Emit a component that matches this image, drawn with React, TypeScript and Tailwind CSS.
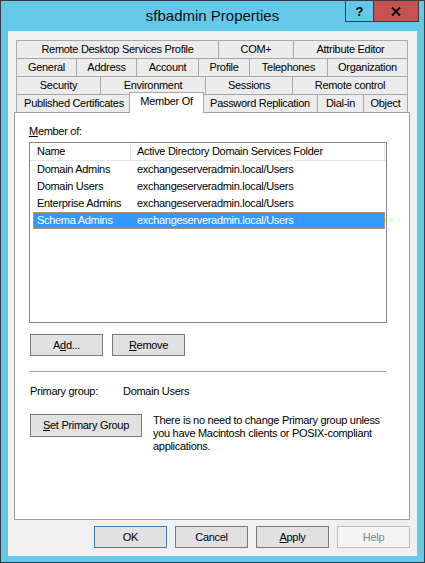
import React from "react";

type Tab = { label: string; w: number; selected?: boolean };

const rows: Tab[][] = [
  [
    { label: "Remote Desktop Services Profile", w: 202 },
    { label: "COM+", w: 75 },
    { label: "Attribute Editor", w: 115 },
  ],
  [
    { label: "General", w: 60 },
    { label: "Address", w: 60 },
    { label: "Account", w: 62 },
    { label: "Profile", w: 51 },
    { label: "Telephones", w: 78 },
    { label: "Organization", w: 81 },
  ],
  [
    { label: "Security", w: 84 },
    { label: "Environment", w: 105 },
    { label: "Sessions", w: 87 },
    { label: "Remote control", w: 116 },
  ],
  [
    { label: "Published Certificates", w: 115 },
    { label: "Member Of", w: 71, selected: true },
    { label: "Password Replication", w: 115 },
    { label: "Dial-in", w: 46 },
    { label: "Object", w: 45 },
  ],
];

const members = [
  ["Domain Admins", "exchangeserveradmin.local/Users"],
  ["Domain Users", "exchangeserveradmin.local/Users"],
  ["Enterprise Admins", "exchangeserveradmin.local/Users"],
  ["Schema Admins", "exchangeserveradmin.local/Users"],
];

function TabRow({ tabs }: { tabs: Tab[] }) {
  return (
    <div className="flex h-[18px] items-start">
      {tabs.map((t, i) => {
        const last = i === tabs.length - 1;
        if (t.selected) {
          return (
            <div
              key={t.label}
              style={{ width: t.w + 4 }}
              className="relative z-10 -mx-[2px] -mt-[2px] h-[21px] shrink-0 border-t border-l border-r border-[#a8a8a8] bg-white flex items-center justify-center pb-[3px]"
            >
              {t.label}
            </div>
          );
        }
        return (
          <div
            key={t.label}
            style={{ width: t.w }}
            className={
              last
                ? "h-[18px] shrink-0 border-t border-l border-r border-[#a8a8a8] bg-[#ececec] flex items-center justify-center"
                : "h-[18px] shrink-0 border-t border-l border-[#a8a8a8] bg-[#ececec] flex items-center justify-center"
            }
          >
            {t.label}
          </div>
        );
      })}
    </div>
  );
}

function Btn({
  children,
  w,
  h = 22,
  variant = "normal",
}: {
  children: React.ReactNode;
  w: number;
  h?: number;
  variant?: "normal" | "default" | "disabled";
}) {
  const cls =
    variant === "default"
      ? "shrink-0 border border-[#3c7fb1] bg-[#e1e1e1] flex items-center justify-center"
      : variant === "disabled"
      ? "shrink-0 border border-[#bfbfbf] bg-[#f4f4f4] text-[#838383] flex items-center justify-center"
      : "shrink-0 border border-[#7a7a7a] bg-[#e1e1e1] flex items-center justify-center";
  return (
    <div style={{ width: w, height: h }} className={cls}>
      <span>{children}</span>
    </div>
  );
}

export default function App() {
  return (
    <div className="w-[425px] h-[563px] bg-[#63c8ea] border border-[#3b3b3b] flex flex-col font-['Liberation_Sans',Arial,sans-serif] text-[11px] leading-[13px] tracking-[-0.3px] text-black">
      {/* Title bar */}
      <div className="relative h-[30px] shrink-0 flex items-center justify-center">
        <span className="text-[15px] leading-[18px] tracking-normal text-[#111]">
          sfbadmin Properties
        </span>
        <div className="absolute -top-[1px] right-[5px] flex">
          <div className="w-[29px] h-[22px] border border-[#3b3b3b] bg-[#63c8ea] flex items-center justify-center text-[13px] font-bold tracking-normal">
            ?
          </div>
          <div className="w-[45px] h-[22px] border-t border-r border-b border-[#3b3b3b] bg-[#c75050] flex items-center justify-center">
            <svg width="10" height="9" viewBox="0 0 10 9">
              <path d="M1 0.5 L9 8.5 M9 0.5 L1 8.5" stroke="#000" strokeWidth="2" />
            </svg>
          </div>
        </div>
      </div>

      {/* Client area */}
      <div className="mx-[7px] mb-[6px] flex-1 bg-[#f0f0f0] flex flex-col pl-[6px] pr-[7px] pt-[9px]">
        {/* Tabs */}
        <div className="mx-[2px] flex flex-col">
          {rows.map((r, i) => (
            <TabRow key={i} tabs={r} />
          ))}
        </div>

        {/* Panel */}
        <div className="h-[408px] shrink-0 border border-[#999ca3] bg-white flex flex-col pl-[14px]">
          <div className="mt-[12px] h-[13px]">
            <span className="underline underline-offset-1">M</span>ember of:
          </div>

          {/* List */}
          <div className="mt-[4px] w-[358px] h-[181px] border border-[#828790] bg-white flex flex-col">
            <div className="flex h-[18px] border-b border-[#e5e5e5]">
              <div className="w-[101px] h-full border-r border-[#e5e5e5] pl-[7px] flex items-center">
                Name
              </div>
              <div className="w-[254px] h-full border-r border-[#e5e5e5] pl-[6px] flex items-center">
                Active Directory Domain Services Folder
              </div>
            </div>
            <div className="flex flex-col pl-[3px]">
              {members.map(([n, f], i) => {
                const sel = i === 3;
                return (
                  <div
                    key={n}
                    className={
                      sel
                        ? "flex h-[17px] w-[352px] items-center bg-[#3399ff] text-white outline-1 outline-dotted outline-[#c9a27a] -outline-offset-1"
                        : "flex h-[17px] w-[352px] items-center"
                    }
                  >
                    <div className="w-[98px] pl-[4px]">{n}</div>
                    <div className="pl-[6px]">{f}</div>
                  </div>
                );
              })}
            </div>
          </div>

          {/* Add / Remove */}
          <div className="mt-[11px] ml-[1px] flex gap-[9px]">
            <Btn w={73}>
              A<span className="underline underline-offset-1">d</span>d...
            </Btn>
            <Btn w={73}>
              <span className="underline underline-offset-1">R</span>emove
            </Btn>
          </div>

          {/* Separator */}
          <div className="mt-[15px] w-[357px] border-t border-[#a0a0a0]" />

          {/* Primary group */}
          <div className="mt-[13px] flex h-[13px] ml-[1px]">
            <div className="w-[93px]">Primary group:</div>
            <div>Domain Users</div>
          </div>

          {/* Set primary group */}
          <div className="mt-[16px] ml-[1px] flex items-start">
            <Btn w={112} h={23}>
              <span className="underline underline-offset-1">S</span>et Primary Group
            </Btn>
            <div className="ml-[11px] leading-[13px]">
              There is no need to change Primary group unless
              <br />
              you have Macintosh clients or POSIX-compliant
              <br />
              applications.
            </div>
          </div>
        </div>

        {/* Bottom buttons */}
        <div className="mt-[6px] flex justify-end gap-[8px]">
          <Btn w={73} variant="default">
            OK
          </Btn>
          <Btn w={73}>Cancel</Btn>
          <Btn w={73}>
            <span className="underline underline-offset-1">A</span>pply
          </Btn>
          <Btn w={73} variant="disabled">
            Help
          </Btn>
        </div>
      </div>
    </div>
  );
}
